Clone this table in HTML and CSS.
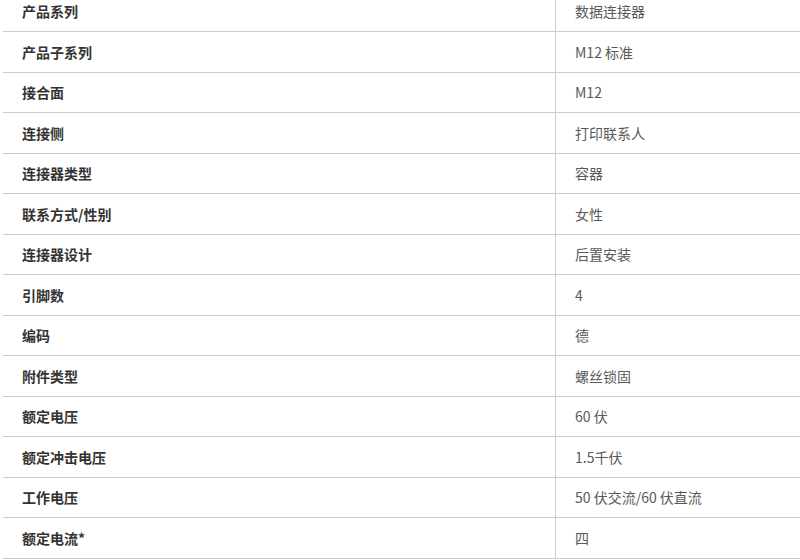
FILE: index.html
```html
<!DOCTYPE html>
<html lang="zh">
<head>
<meta charset="utf-8">
<link rel="stylesheet" href="styles.css">
</head>
<body>
<div class="specs">
  <div class="row"><div class="label">产品系列</div><div class="value">数据连接器</div></div>
  <div class="row"><div class="label">产品子系列</div><div class="value">M12 标准</div></div>
  <div class="row"><div class="label">接合面</div><div class="value">M12</div></div>
  <div class="row"><div class="label">连接侧</div><div class="value">打印联系人</div></div>
  <div class="row"><div class="label">连接器类型</div><div class="value">容器</div></div>
  <div class="row"><div class="label">联系方式/性别</div><div class="value">女性</div></div>
  <div class="row"><div class="label">连接器设计</div><div class="value">后置安装</div></div>
  <div class="row"><div class="label">引脚数</div><div class="value">4</div></div>
  <div class="row"><div class="label">编码</div><div class="value">德</div></div>
  <div class="row"><div class="label">附件类型</div><div class="value">螺丝锁固</div></div>
  <div class="row"><div class="label">额定电压</div><div class="value">60 伏</div></div>
  <div class="row"><div class="label">额定冲击电压</div><div class="value">1.5千伏</div></div>
  <div class="row"><div class="label">工作电压</div><div class="value">50 伏交流/60 伏直流</div></div>
  <div class="row"><div class="label">额定电流*</div><div class="value">四</div></div>
</div>
</body>
</html>
```
FILE: styles.css
```css
html, body {
  margin: 0;
  padding: 0;
  overflow: hidden;
  background: #fff;
}
body {
  font-family: "Noto Sans CJK SC", "Noto Sans", sans-serif;
  font-size: 14px;
  height: 560px;
}
.specs {
  margin-top: -8.5px;
  margin-left: 3px;
}
.row {
  display: grid;
  grid-template-columns: 552px 1fr;
  height: 40.5px;
  box-sizing: border-box;
  border-bottom: 1px solid #cccccc;
}
.label, .value {
  display: flex;
  align-items: center;
  line-height: 20px;
}
.label {
  padding-left: 19px;
  font-weight: 700;
  color: #333;
}
.value {
  padding-left: 19px;
  border-left: 1px solid #cccccc;
  color: #595959;
}
```
